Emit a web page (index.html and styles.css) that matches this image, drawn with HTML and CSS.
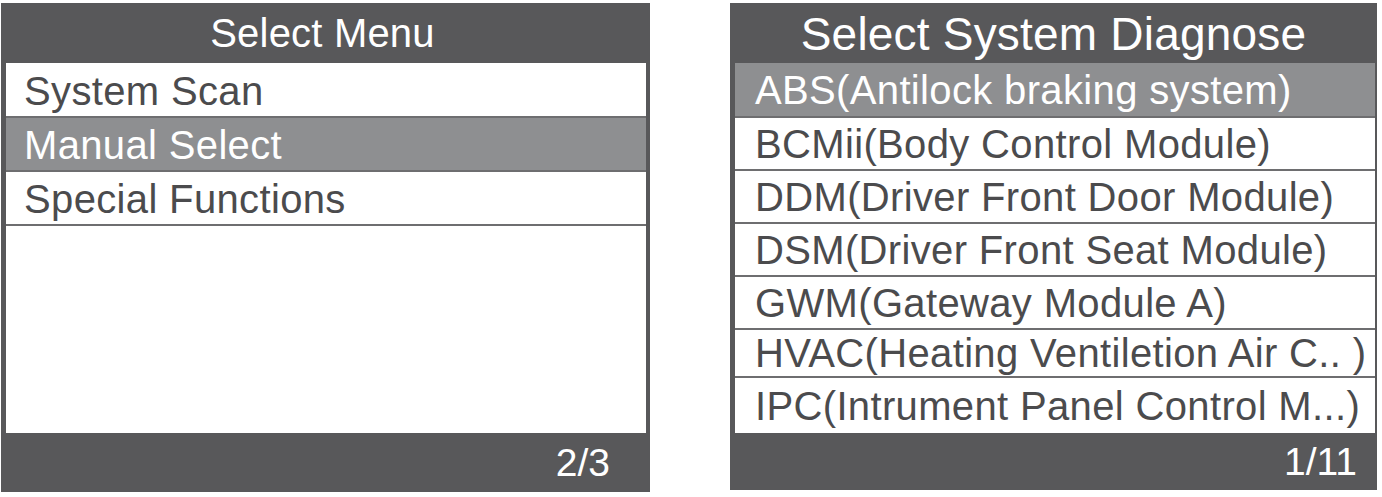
FILE: index.html
```html
<!DOCTYPE html>
<html>
<head>
<meta charset="utf-8">
<link rel="stylesheet" href="styles.css">
</head>
<body>
<div class="screens">
  <section class="panel panel-left">
    <header class="title">Select Menu</header>
    <div class="list">
      <div class="row">System Scan</div>
      <div class="row active">Manual Select</div>
      <div class="row">Special Functions</div>
    </div>
    <footer class="pager">2/3</footer>
  </section>
  <section class="panel panel-right">
    <header class="title title-lg">Select System Diagnose</header>
    <div class="list">
      <div class="row first active">ABS(Antilock braking system)</div>
      <div class="row">BCMii(Body Control Module)</div>
      <div class="row">DDM(Driver Front Door Module)</div>
      <div class="row">DSM(Driver Front Seat Module)</div>
      <div class="row">GWM(Gateway Module A)</div>
      <div class="row short">HVAC(Heating Ventiletion Air C.. )</div>
      <div class="row last">IPC(Intrument Panel Control M...)</div>
    </div>
    <footer class="pager">1/11</footer>
  </section>
</div>
</body>
</html>
```

FILE: styles.css
```css
html, body {
  margin: 0;
  padding: 0;
  background: #ffffff;
}

body {
  font-family: "Liberation Sans", Arial, Helvetica, sans-serif;
}

.screens {
  display: flex;
  align-items: flex-start;
  gap: 80px;
  padding: 3px 0 0 1px;
}

.panel {
  background: #58585a;
  display: flex;
  flex-direction: column;
}

.panel-left {
  width: 649px;
  height: 489px;
}

.panel-right {
  width: 647px;
  height: 487px;
}

.title {
  height: 60px;
  flex: none;
  display: flex;
  align-items: center;
  justify-content: center;
  color: #ffffff;
  font-size: 40px;
  letter-spacing: 0.2px;
  padding-right: 6px;
}

.title-lg {
  font-size: 46px;
  letter-spacing: 0.2px;
  padding-right: 0;
  padding-top: 2px;
  box-sizing: border-box;
}

.list {
  flex: 1;
  background: #ffffff;
  display: flex;
  flex-direction: column;
}

.panel-left .list {
  margin: 0 4px 0 5px;
}

.panel-right .list {
  margin: 0 2px 0 5px;
}

.row {
  flex: none;
  height: 52px;
  display: flex;
  align-items: center;
  color: #4b4b4d;
  font-size: 40px;
  white-space: nowrap;
  overflow: hidden;
  border-bottom: 2px solid #6e6e70;
  box-sizing: border-box;
}

.panel-left .row {
  padding-left: 18px;
  padding-top: 3px;
  letter-spacing: 0.35px;
  height: 54px;
}

.panel-left .row:first-child {
  height: 55px;
}

.panel-right .row {
  padding-left: 20px;
  padding-top: 1px;
  height: 53px;
  font-size: 40px;
  letter-spacing: 0.35px;
}

.panel-right .row.first {
  height: 55px;
}

.panel-right .row.short {
  height: 48px;
}

.panel-right .row.last {
  flex: 1;
  height: auto;
  border-bottom: none;
}

.row.active {
  background: #8e8f91;
  color: #ffffff;
}

.pager {
  flex: none;
  height: 59px;
  display: flex;
  align-items: center;
  justify-content: flex-end;
  color: #ffffff;
  font-size: 39px;
}

.panel-left .pager {
  padding-right: 40px;
}

.panel-right .pager {
  height: 57px;
  padding-right: 20px;
}
```
